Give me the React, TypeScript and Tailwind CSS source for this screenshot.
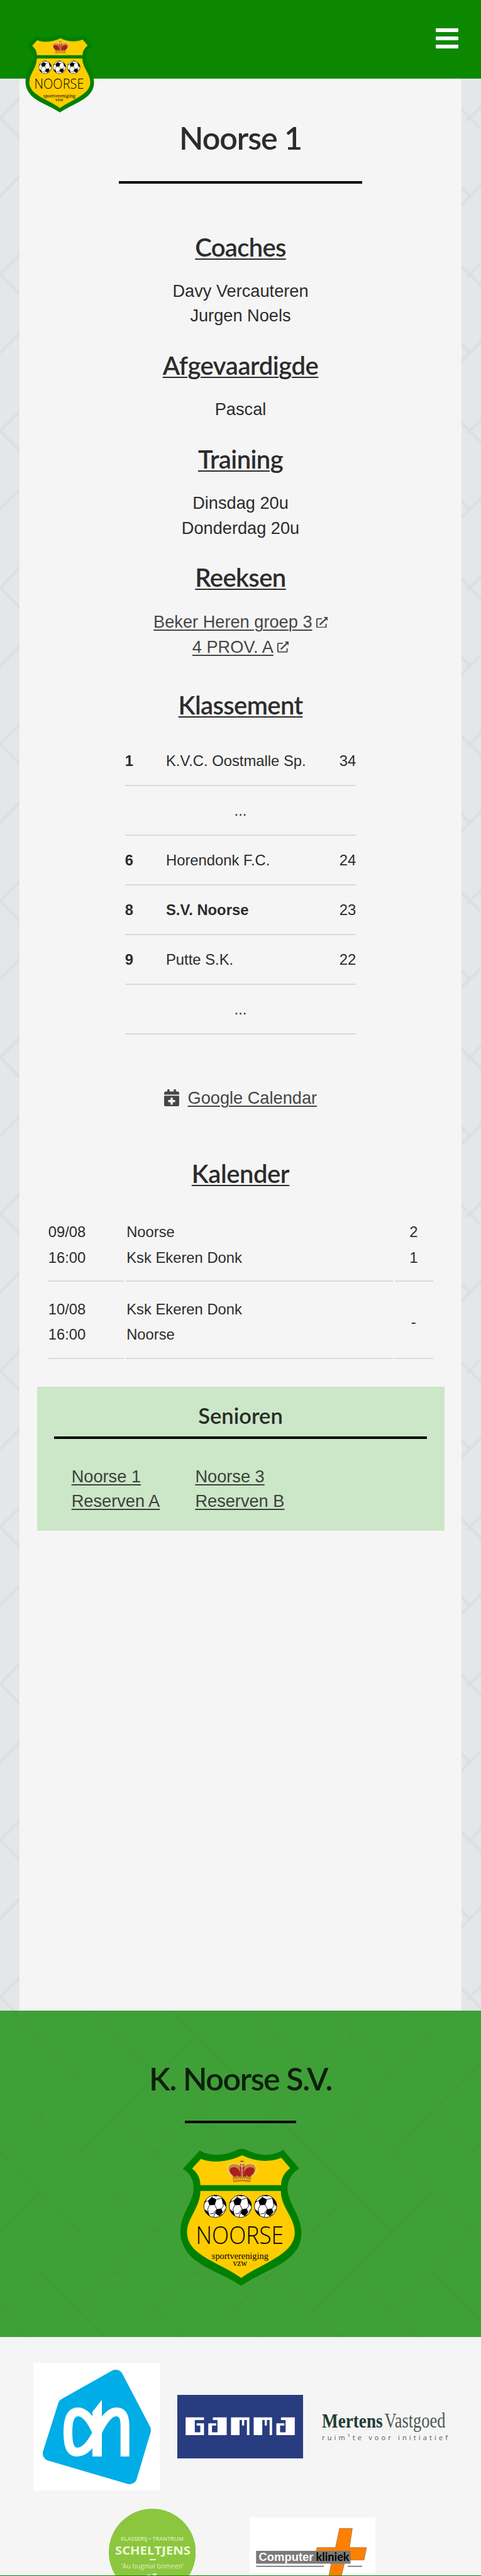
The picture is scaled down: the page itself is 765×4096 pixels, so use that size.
import type { ReactNode } from "react";
import { FaCalendarPlus } from "react-icons/fa";

function Herringbone({ id, originY, opacity }: { id: string; originY: number; opacity: number }) {
  return (
    <svg className="pointer-events-none absolute inset-0 h-full w-full" aria-hidden="true">
      <defs>
        <pattern
          id={id}
          x="0"
          y={originY}
          width="124.55"
          height="249"
          patternUnits="userSpaceOnUse"
          viewBox="0 0 176 352"
          preserveAspectRatio="none"
        >
          <g stroke="#000" strokeWidth="6" fill="none">
            <path d="M-6-6L176 176M88 264L182 358M-6 346L6 358M88 88L-6 182M176 176L-6 358" />
            <path d="M170 -6L182 6M170 6L182 -6" />
          </g>
        </pattern>
      </defs>
      <rect width="100%" height="100%" fill={`url(#${id})`} opacity={opacity} />
    </svg>
  );
}

function Ball({ x }: { x: number }) {
  return (
    <g transform={`translate(${x} 475)`}>
      <circle r="75" fill="#fff" stroke="#111" strokeWidth="4" />
      <g fill="#000">
        <path d="M-22-62L10-46L-2-9L-38-7L-48-38Z" />
        <path d="M12 19L44 14L52 42L28 66L0 46Z" />
        <path d="M-72 20L-45 38L-34 68A75 75 0 0 1-72 20Z" />
        <path d="M42-60A75 75 0 0 1 75-12L73 2L52-24Z" />
        <path d="M-18-72A75 75 0 0 1 22-71L10-66Z" />
        <path d="M-74-14A75 75 0 0 1-58-47L-62-30Z" />
        <path d="M28 66L58 46A75 75 0 0 1 30 68Z" />
      </g>
      <path
        d="M10-46L44-55M-2-9L12 19M-38-7L-50 20L-45 38M-48-38L-62-30M12 19L-8 46L-34 52M52-24L57-2L44 14M0 46L-10 72M52 42L72 18M-22-62L-16-71"
        stroke="#111"
        strokeWidth="4"
        fill="none"
      />
    </g>
  );
}

function Crest({ className }: { className: string }) {
  return (
    <svg className={className} viewBox="60 80 840 940" preserveAspectRatio="none">
      <path
        fill="#008000"
        d="M203 98C270 142 375 134 455 95Q487 79 520 95C595 134 690 144 766 94L874 220C822 254 795 300 795 355C795 450 889 540 889 655C889 730 855 780 810 820C720 895 615 925 482 1011C350 925 250 905 150 820C110 780 72 720 72 650C72 520 162 450 162 350C162 300 140 255 89 222Z"
      />
      <path
        fill="#fc0"
        d="M211 155C290 188 400 174 489 131C570 172 670 182 753 148L813 218C770 250 752 290 752 332H207C207 290 190 250 151 221Z"
      />
      <path
        fill="#fc0"
        d="M207 371H750C750 480 844 550 844 650C844 700 820 745 770 785C690 850 580 890 482 958C380 885 270 850 190 785C140 745 117 700 117 650C117 555 207 480 207 371Z"
      />
      <g>
        <path d="M432 278C385 245 385 195 430 188C465 184 485 210 488 275Z" fill="#c98b2b" />
        <path d="M545 278C592 245 592 195 547 188C512 184 491 210 488 275Z" fill="#c98b2b" />
        <path d="M436 276C398 250 396 216 425 212C462 208 476 235 480 276Z" fill="#a81e22" />
        <path d="M541 276C579 250 581 216 552 212C515 208 501 235 497 276Z" fill="#a81e22" />
        <path d="M470 190L507 190L499 270L478 270Z" fill="#b5302c" />
        <path
          d="M430 276C380 245 378 192 432 187C462 186 478 196 486 210M547 276C597 245 599 192 545 187C515 186 499 196 491 210M488 168V276"
          fill="none"
          stroke="#e8d3b0"
          strokeWidth="8"
          strokeDasharray="7 4"
        />
        <path d="M477 166H499V178H477Z" fill="#a5761f" />
        <path d="M424 262L440 280L456 264L472 280L488 262L504 280L520 264L536 280L552 262L546 313Q488 300 430 313Z" fill="#c8860f" />
        <path d="M434 296Q488 286 543 296" fill="none" stroke="#f0dca6" strokeWidth="7" strokeDasharray="9 6" />
      </g>
      <Ball x={306} />
      <Ball x={477} />
      <Ball x={647} />
      <text
        x="177"
        y="727"
        textLength="592"
        lengthAdjust="spacingAndGlyphs"
        className="fill-black font-['Open_Sans',sans-serif] text-[163px] font-light"
      >
        NOORSE
      </text>
      <text
        x="284"
        y="830"
        textLength="382"
        lengthAdjust="spacingAndGlyphs"
        className="fill-black font-['Liberation_Serif',serif] text-[66px]"
      >
        sportvereniging
      </text>
      <text
        x="427"
        y="876"
        textLength="96"
        lengthAdjust="spacingAndGlyphs"
        className="fill-black font-['Liberation_Serif',serif] text-[66px]"
      >
        vzw
      </text>
    </svg>
  );
}

function ExternalIcon() {
  return (
    <svg className="ml-[6px] inline-block h-[17.6px] w-[18.4px] align-baseline" viewBox="0 0 78 74">
      <path d="M38 12H8Q4 12 4 16V66Q4 70 8 70H62Q66 70 66 66V46" fill="none" stroke="#4a4a4a" strokeWidth="8" />
      <path d="M24 52L66 12" stroke="#4a4a4a" strokeWidth="10" />
      <path d="M50 0H78V28Z" fill="#4a4a4a" />
    </svg>
  );
}

function SectionTitle({ children, className }: { children: ReactNode; className: string }) {
  return (
    <h2
      className={`text-center font-['Lato',sans-serif] text-[40px] leading-[49px] font-semibold underline decoration-[1.9px] underline-offset-[2.6px] ${className}`}
    >
      {children}
    </h2>
  );
}

const standings = [
  { pos: "1", team: "K.V.C. Oostmalle Sp.", pts: "34" },
  null,
  { pos: "6", team: "Horendonk F.C.", pts: "24" },
  { pos: "8", team: "S.V. Noorse", pts: "23", own: true },
  { pos: "9", team: "Putte S.K.", pts: "22" },
  null,
];

const matches = [
  { date: "09/08", time: "16:00", home: "Noorse", away: "Ksk Ekeren Donk", score: ["2", "1"] },
  { date: "10/08", time: "16:00", home: "Ksk Ekeren Donk", away: "Noorse", score: ["-"] },
];

function GammaLogo() {
  return (
    <svg className="block h-[101px] w-[200px]" viewBox="0 0 410 368" preserveAspectRatio="none">
      <rect width="410" height="368" fill="#283c80" />
      <g fill="#fff">
        <path d="M27 130H87V146H57V217H75V178H63V165H87V233H27Z" />
        <path d="M116 130H161V233H101V165H127V178H113V217H131V146H116Z" />
        <path d="M175 130H235V233H227V146H218V178H211V146H203V233H175Z" />
        <path d="M249 130H309V233H301V146H292V178H285V146H277V233H249Z" />
        <path d="M338 130H383V233H323V165H349V178H335V217H353V146H338Z" />
      </g>
    </svg>
  );
}

export default function App() {
  return (
    <div className="relative flex h-[4096px] w-[765px] flex-col overflow-hidden bg-[#e4e6e8] font-['Liberation_Sans',Arial,sans-serif] text-[27.2px] leading-[39.4px] text-[#2c2c2c]">
      <Herringbone id="page-weave" originY={-61.6} opacity={0.035} />

      <header className="relative z-10 flex h-[124.5px] shrink-0 items-start justify-between bg-[#0b8800] pr-[36px] pl-[39.4px]">
        <Crest className="mt-[53.8px] h-[126px] w-[112px] shrink-0" />
        <div className="mt-[45.3px] flex w-[35.6px] flex-col gap-[6.6px]">
          <span className="h-[6.2px] rounded-[1px] bg-white" />
          <span className="h-[6.2px] rounded-[1px] bg-white" />
          <span className="h-[6.2px] rounded-[1px] bg-white" />
        </div>
      </header>

      <main className="relative mx-auto h-[3072.8px] w-[702.6px] shrink-0 bg-[#f5f5f5] pt-[63.8px]">
        <h1 className="text-center font-['Lato',sans-serif] text-[50.2px] leading-[61px] font-semibold tracking-[-1.1px]">
          Noorse 1
        </h1>
        <div className="mx-auto mt-[38.9px] h-[3.6px] w-[387.5px] bg-black" />

        <SectionTitle className="mt-[77.3px] tracking-[-0.7px]">Coaches</SectionTitle>
        <p className="mt-[25px] text-center">
          Davy Vercauteren
          <br />
          Jurgen Noels
        </p>

        <SectionTitle className="mt-[35.2px] tracking-[-0.48px]">Afgevaardigde</SectionTitle>
        <p className="mt-[25px] text-center">Pascal</p>

        <SectionTitle className="mt-[35.2px] tracking-[-0.6px]">Training</SectionTitle>
        <p className="mt-[25.6px] text-center">
          Dinsdag 20u
          <br />
          Donderdag 20u
        </p>

        <SectionTitle className="mt-[35.2px] tracking-[-0.6px]">Reeksen</SectionTitle>
        <div className="mt-[26px] text-center text-[#464646]">
          <div className="h-[39.4px]">
            <a className="underline decoration-[2px] underline-offset-[3px]">Beker Heren groep 3</a>
            <ExternalIcon />
          </div>
          <div className="h-[39.4px]">
            <a className="underline decoration-[2px] underline-offset-[3px]">4 PROV. A</a>
            <ExternalIcon />
          </div>
        </div>

        <SectionTitle className="mt-[48.6px] tracking-[-0.64px]">Klassement</SectionTitle>
        <div className="mx-auto mt-[25.2px] w-[367.4px] text-[23.8px] leading-[34px]">
          {standings.map((row, i) => (
            <div key={i} className="flex h-[79px] items-center border-b-2 border-[#dadada] pt-[2px]">
              {row ? (
                <>
                  <span className="w-[65.2px] font-bold">{row.pos}</span>
                  <span className={row.own ? "flex-1 font-bold" : "flex-1"}>{row.team}</span>
                  <span>{row.pts}</span>
                </>
              ) : (
                <span className="flex-1 text-center">...</span>
              )}
            </div>
          ))}
        </div>

        <div className="mt-[81.2px] flex items-center justify-center gap-[13.6px] text-[#464646]">
          <FaCalendarPlus className="h-[27.4px] w-[24px] shrink-0" />
          <a className="underline decoration-[2px] underline-offset-[3px]">Google Calendar</a>
        </div>

        <SectionTitle className="mt-[76.2px] tracking-[-0.45px]">Kalender</SectionTitle>
        <div className="mx-auto mt-[28.7px] grid w-[613.5px] grid-cols-[121px_1fr_61px] gap-[3.7px] text-[23.8px] leading-[40.8px]">
          {matches.map((m) => (
            <div key={m.date} className="contents">
              <div className="flex h-[119px] flex-col justify-center border-b-2 border-[#dadada] pt-[4px] pl-[1px]">
                <span>{m.date}</span>
                <span>{m.time}</span>
              </div>
              <div className="flex h-[119px] flex-col justify-center border-b-2 border-[#dadada] pt-[4px] pl-[0.7px]">
                <span>{m.home}</span>
                <span>{m.away}</span>
              </div>
              <div className="flex h-[119px] flex-col items-center justify-center border-b-2 border-[#dadada] pt-[4px] pr-[2px]">
                {m.score.map((s) => (
                  <span key={s}>{s}</span>
                ))}
              </div>
            </div>
          ))}
        </div>

        <section className="mx-auto mt-[43.9px] h-[229px] w-[648px] bg-[#cce6c8] px-[27.5px] pt-[23.9px] text-[#272c26]">
          <h3 className="text-center font-['Lato',sans-serif] text-[34.5px] leading-[43px] font-semibold">
            Senioren
          </h3>
          <div className="mt-[12px] h-[4.3px] bg-black" />
          <div className="mt-[39.5px] grid grid-cols-[196.7px_1fr] pl-[27.7px] text-[#3a4339]">
            <a className="underline decoration-[2px] underline-offset-[3px]">Noorse 1</a>
            <a className="underline decoration-[2px] underline-offset-[3px]">Noorse 3</a>
            <a className="underline decoration-[2px] underline-offset-[3px]">Reserven A</a>
            <a className="underline decoration-[2px] underline-offset-[3px]">Reserven B</a>
          </div>
        </section>
      </main>

      <section className="relative h-[519.2px] shrink-0 bg-[#40a038] pt-[76.7px]">
        <Herringbone id="footer-weave" originY={-3258.9} opacity={0.02} />
        <h2 className="relative text-center font-['Lato',sans-serif] text-[50.2px] leading-[61px] font-semibold tracking-[-1.45px] text-[#0d1f0c]">
          K. Noorse S.V.
        </h2>
        <div className="relative mx-auto mt-[37.3px] h-[3.8px] w-[177.3px] bg-black" />
        <Crest className="relative mx-auto mt-[39.2px] block h-[221.7px] w-[198px]" />
      </section>

      <section className="relative flex-1 overflow-hidden bg-[#f5f5f5] pt-[41px]">
        <div className="flex items-center pl-[52.7px]">
          <svg className="h-[202.4px] w-[202.4px] shrink-0 bg-white" viewBox="0 0 202.4 202.4">
            <path
              d="M131 23L51 68L27 144L153 181L175 107Z"
              fill="#00ade6"
              stroke="#00ade6"
              strokeWidth="24"
              strokeLinejoin="round"
            />
            <path
              d="M102 113C92 90 82 78 71 78C58 78 55 92 55 110C55 130 58 142 70 142C82 142 92 130 102 110C112 90 122 78 132 78C143 78 145.7 88 145.7 100V149"
              fill="none"
              stroke="#fff"
              strokeWidth="14"
            />
            <path d="M94 78L109 59V149H94Z" fill="#fff" />
          </svg>
          <div className="ml-[27.4px]">
            <GammaLogo />
          </div>
          <svg className="ml-[29.4px] h-[60px] w-[206px] shrink-0" viewBox="0 0 206 60">
            <g transform="translate(0 31) scale(1 1.17)">
              <text x="0" y="0" className="fill-[#1f3d33] font-['Liberation_Serif',serif] text-[27.2px] font-bold">
                Mertens
              </text>
            </g>
            <g transform="translate(99.5 31) scale(1 1.24)">
              <text x="0" y="0" className="fill-[#4c5a55] font-['Liberation_Serif',serif] text-[26.5px]">
                Vastgoed
              </text>
            </g>
            <text x="0" y="51" textLength="200" className="fill-[#555] font-['Open_Sans',sans-serif] text-[11px]">
              ruim¹te voor initiatief
            </text>
          </svg>
        </div>
        <div className="mt-[29px] flex items-start pl-[172.7px]">
          <svg className="h-[138.4px] w-[138.4px] shrink-0" viewBox="0 0 138.4 138.4">
            <circle cx="69.2" cy="69.2" r="69.2" fill="#8cc63f" />
            <g className="fill-[#eef8d8] font-['Open_Sans',sans-serif]">
              <text x="19" y="51" textLength="100" lengthAdjust="spacingAndGlyphs" className="text-[9.5px] font-semibold" opacity="0.75">
                KLASSERIJ • TRANTRUM
              </text>
              <text x="10" y="72.6" textLength="120" lengthAdjust="spacingAndGlyphs" className="text-[18px] font-bold">
                SCHELTJENS
              </text>
              <rect x="65" y="80" width="10" height="2" />
              <text x="20" y="95.5" textLength="99" lengthAdjust="spacingAndGlyphs" className="text-[11px]" opacity="0.85">
                ‘Au bugnial bomeen’
              </text>
              <rect x="61" y="104.5" width="6" height="3" opacity="0.7" />
              <rect x="70" y="103" width="6" height="5" opacity="0.9" />
            </g>
          </svg>
          <svg className="mt-[14px] ml-[86px] h-[110px] w-[200px] shrink-0 bg-white" viewBox="0 0 200 110">
            <path d="M143 17.3H163.4L158.8 47.8H185.9L182 67.6H152L142 110H122.5L131 67.6H103.4L107.3 47.8H136.5Z" fill="#ff8000" stroke="#8a6a45" strokeWidth="0.7" />
            <rect x="10.3" y="53" width="150.2" height="20.4" fill="#7a7a7a" />
            <text x="14.5" y="69" textLength="87" lengthAdjust="spacingAndGlyphs" className="fill-white font-['Liberation_Sans',sans-serif] text-[18.5px] font-bold">
              Computer
            </text>
            <text x="105.5" y="69" textLength="53" lengthAdjust="spacingAndGlyphs" className="fill-black font-['Lato',sans-serif] text-[18px] font-bold">
              kliniek
            </text>
            <rect x="10.3" y="76.8" width="107.7" height="1.6" fill="#666" />
            <rect x="156" y="76.8" width="23" height="1.6" fill="#666" />
          </svg>
        </div>
      </section>
      <div className="relative h-px shrink-0 bg-[#0b8800]" />
    </div>
  );
}
